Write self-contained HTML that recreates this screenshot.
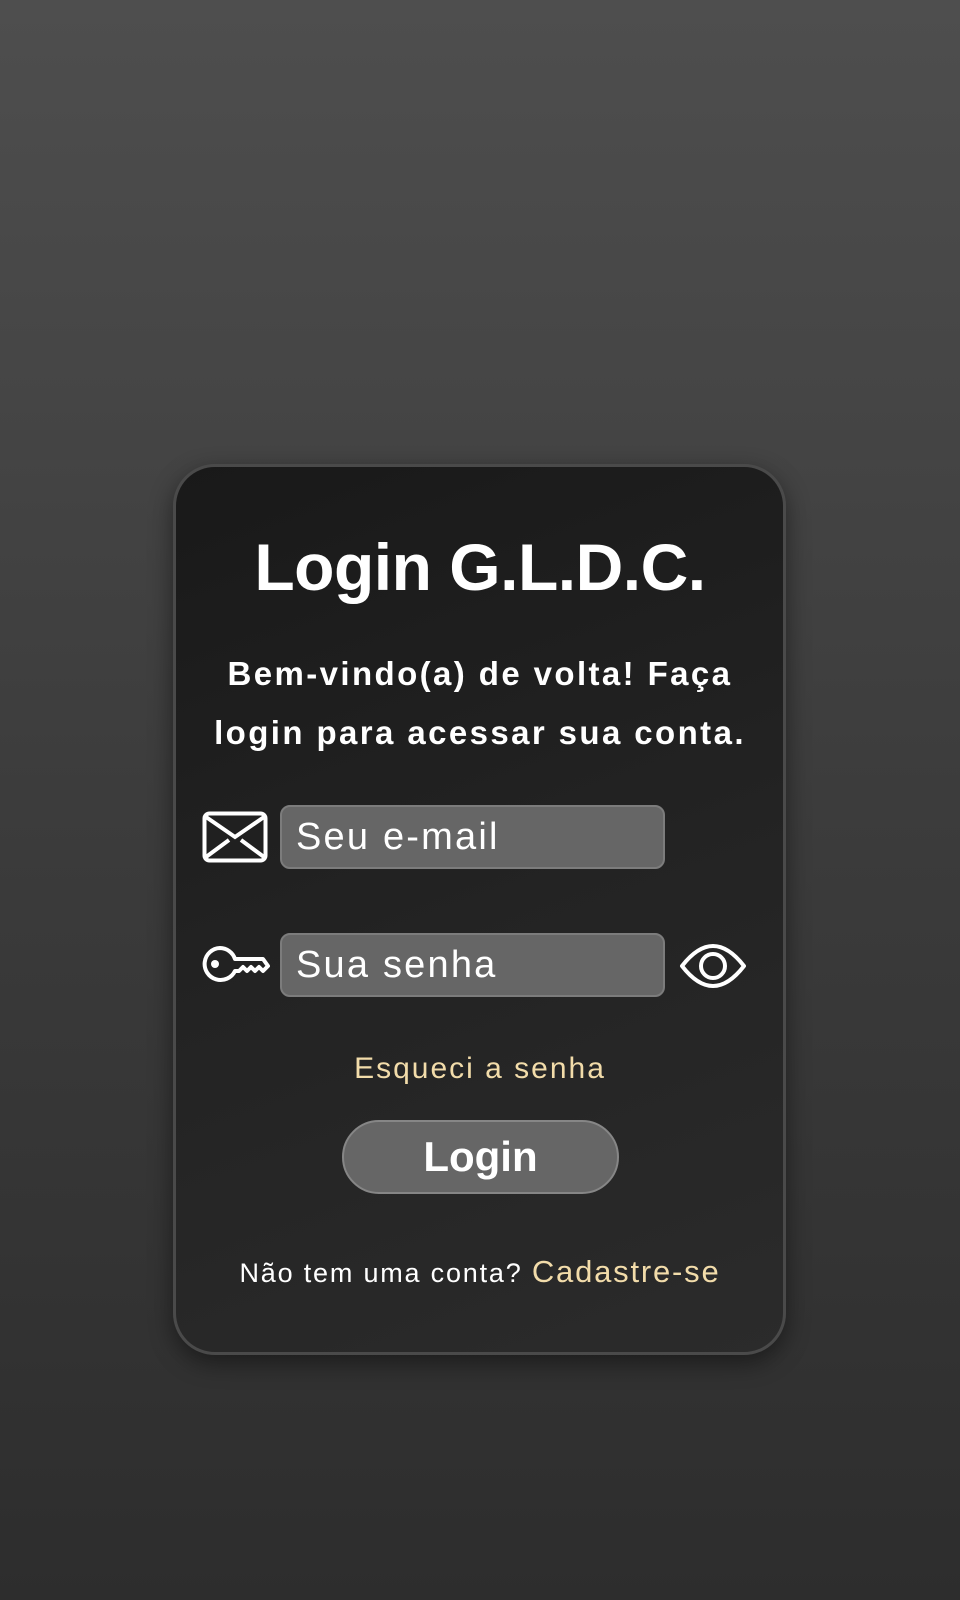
<!DOCTYPE html>
<html><head><meta charset="utf-8"><style>
html,body{margin:0;padding:0}
body{width:960px;height:1600px;background:linear-gradient(180deg,#4e4e4e 0%,#3c3c3c 50%,#2d2d2d 100%);font-family:"Liberation Sans",sans-serif;position:relative;overflow:hidden}
.card{position:absolute;left:173px;top:464px;width:607px;height:885px;border:3px solid #4a4a4a;border-radius:42px;background:linear-gradient(160deg,#191919 0%,#232323 50%,#2b2b2b 100%);box-shadow:0 8px 24px rgba(0,0,0,.45)}
.abs{position:absolute}
h1{position:absolute;left:0;width:960px;top:527px;margin:0;text-align:center;color:#fff;font-size:66px;font-weight:bold;letter-spacing:-0.5px;line-height:80px}
.sub{position:absolute;left:0;width:960px;top:644px;text-align:center;color:#fff;font-weight:bold;font-size:33px;letter-spacing:2.4px;line-height:59px}
.inp{position:absolute;left:280px;width:385px;height:64px;background:#666;border:2px solid #7c7c7c;border-radius:10px;box-sizing:border-box;color:#fff;font-size:38px;letter-spacing:2.2px;line-height:60px;padding-left:14px}
.link{color:#f2dcaa}
.btn{position:absolute;left:342px;top:1120px;width:277px;height:74px;border-radius:37px;background:#666;border:2px solid #868686;box-sizing:border-box;color:#fff;font-weight:bold;font-size:42px;text-align:center;line-height:70px}
</style></head><body>
<div class="card"></div>
<h1>Login G.L.D.C.</h1>
<div class="sub">Bem-vindo(a) de volta! Faça<br>login para acessar sua conta.</div>
<svg class="abs" style="left:202px;top:811px" width="66" height="52" viewBox="0 0 66 52"><rect x="2.5" y="2.5" width="61" height="47" rx="5" fill="none" stroke="#fff" stroke-width="4"/><path d="M4 6 L33 26 L62 6 M4 46 L27 29 M62 46 L39 29" fill="none" stroke="#fff" stroke-width="4"/></svg>
<div class="inp" style="top:805px">Seu e-mail</div>
<svg class="abs" style="left:202px;top:945px" width="68" height="38" viewBox="0 0 68 38"><path d="M18 3 A16 16 0 1 0 33 26 L37 26 L41 22 L45 26 L49 22 L53 26 L57 22 L61 26 L66 21 L61 14 L33 14 A16 16 0 0 0 18 3 Z" fill="none" stroke="#fff" stroke-width="4" stroke-linejoin="round"/><circle cx="13" cy="19" r="4" fill="#fff"/></svg>
<div class="inp" style="top:933px">Sua senha</div>
<svg class="abs" style="left:679px;top:940px" width="68" height="52" viewBox="0 0 68 52"><path d="M3 26 Q34 -14 65 26 Q34 66 3 26 Z" fill="none" stroke="#fff" stroke-width="4" stroke-linejoin="round"/><circle cx="34" cy="26" r="12" fill="none" stroke="#fff" stroke-width="4"/></svg>
<div class="abs link" style="left:0;width:960px;text-align:center;top:1051px;font-size:30px;letter-spacing:2px;line-height:36px">Esqueci a senha</div>
<div class="btn">Login</div>
<div class="abs" style="left:0;width:960px;text-align:center;top:1254px;font-size:27px;letter-spacing:1.8px;line-height:36px;color:#fff">Não tem uma conta? <span class="link" style="font-size:31px">Cadastre-se</span></div>
</body></html>
